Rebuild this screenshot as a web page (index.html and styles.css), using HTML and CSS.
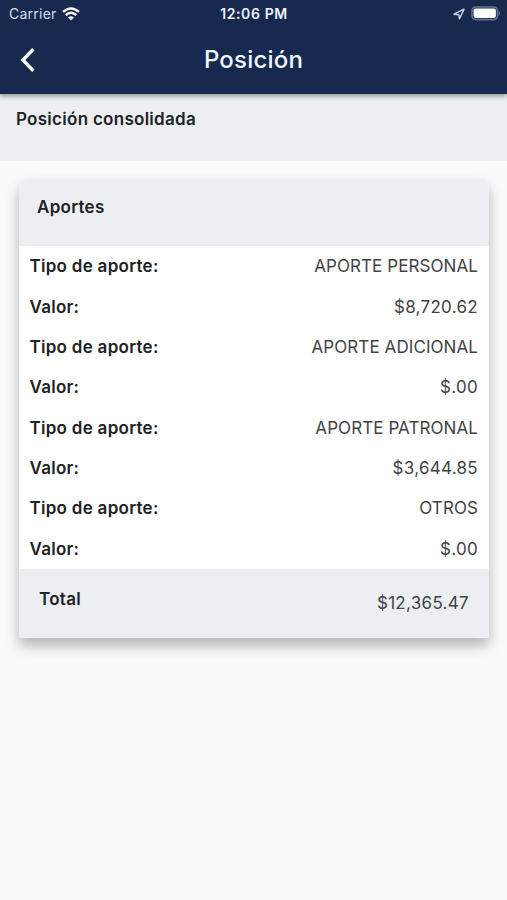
FILE: index.html
```html
<!DOCTYPE html>
<html lang="es">

<head>
    <meta charset="UTF-8">
    <meta name="viewport" content="width=device-width, initial-scale=1.0">
    <title>Posición</title>
    <link rel="stylesheet" href="styles.css">
</head>

<body>
    <header class="header">
        <div class="status">
            <div class="status-left">
                <span class="carrier">Carrier</span>
                <svg class="wifi" width="18" height="14" viewBox="0 0 18 14">
                    <path d="M1 4.9Q9 -2 17 4.9" />
                    <path d="M3.8 8Q9 3.4 14.2 8" />
                    <path class="dot" d="M6 10.6Q9 8 12 10.6L9 13.6Z" />
                </svg>
            </div>
            <span class="time">12:06 PM</span>
            <div class="status-right">
                <svg class="location" width="12" height="12" viewBox="0 0 12 12">
                    <path d="M1 6.2L11 1.2L6.5 10.8L5.8 6.7Z" />
                </svg>
                <svg class="battery" width="30" height="15" viewBox="0 0 30 15">
                    <rect class="battery-case" x="1" y="1" width="25.5" height="12.6" rx="4" />
                    <rect class="battery-level" x="2.6" y="2.6" width="22.3" height="9.4" rx="2" />
                    <path class="battery-tip" d="M27.6 4.6Q30.6 7.3 27.6 10Z" />
                </svg>
            </div>
        </div>
        <div class="toolbar">
            <a class="back" aria-label="Volver">
                <svg width="16" height="26" viewBox="0 0 16 26">
                    <path d="M13.3 2.2L2.9 13L13.3 23.8" />
                </svg>
            </a>
            <h1>Posición</h1>
        </div>
    </header>

    <div class="subtitle">
        <h2>Posición consolidada</h2>
    </div>

    <div class="card">
        <div class="card-header">
            <h2>Aportes</h2>
        </div>
        <div class="card-body">
            <div class="row"><b>Tipo de aporte:</b><span class="tipo">APORTE PERSONAL</span></div>
            <div class="row"><b>Valor:</b><span>$8,720.62</span></div>
            <div class="row"><b>Tipo de aporte:</b><span class="tipo">APORTE ADICIONAL</span></div>
            <div class="row"><b>Valor:</b><span>$.00</span></div>
            <div class="row"><b>Tipo de aporte:</b><span class="tipo">APORTE PATRONAL</span></div>
            <div class="row"><b>Valor:</b><span>$3,644.85</span></div>
            <div class="row"><b>Tipo de aporte:</b><span class="tipo">OTROS</span></div>
            <div class="row"><b>Valor:</b><span>$.00</span></div>
        </div>
        <div class="card-footer">
            <b>Total</b>
            <span class="total">$12,365.47</span>
        </div>
    </div>
</body>

</html>
```
FILE: styles.css
```css
* {
    box-sizing: border-box;
}

body {
    margin: 0;
    min-height: 900px;
    background-color: #fafafa;
    color: #212225;
    font-family: Inter, "Liberation Sans", sans-serif;
    font-size: 17px;
    line-height: 20px;
}

h1,
h2 {
    margin: 0;
}

h2,
b {
    font-size: 17px;
    font-weight: 600;
    line-height: 20px;
    letter-spacing: 0.28px;
}

svg {
    display: block;
    fill: none;
}

/* header */
.header {
    position: relative;
    height: 94px;
    background-color: #17294f;
    color: #fff;
    box-shadow: 0 2px 5px rgba(0, 0, 0, 0.4);
}

.status {
    display: grid;
    grid-template-columns: 1fr auto 1fr;
    align-items: center;
    height: 27px;
    padding: 0 7px 0 9px;
}

.status-left,
.status-right {
    display: flex;
    align-items: center;
}

.status-left {
    gap: 5px;
}

.status-right {
    justify-content: flex-end;
    gap: 6px;
}

.carrier {
    color: #d5ddec;
    font-size: 14px;
    letter-spacing: 0.25px;
}

.time {
    margin-right: 1px;
    color: #eef2fb;
    font-size: 14px;
    font-weight: 600;
    letter-spacing: 0.6px;
}

.wifi path {
    stroke: #fff;
    stroke-width: 2.4;
}

.wifi .dot {
    fill: #fff;
    stroke: none;
}

.location path {
    stroke: #c5d2e8;
    stroke-width: 1.5;
    stroke-linejoin: round;
}

.battery {
    margin-right: -1px;
}

.battery-case {
    stroke: #66738f;
    stroke-width: 1.6;
}

.battery-level {
    fill: #fff;
}

.battery-tip {
    fill: #66738f;
}

.toolbar {
    display: grid;
    grid-template-columns: 60px 1fr 60px;
    align-items: center;
    height: 65px;
}

.back {
    padding-left: 20px;
}

.back path {
    stroke: #fff;
    stroke-width: 3.4;
}

h1 {
    color: #f1f7ff;
    font-size: 24px;
    font-weight: 500;
    line-height: 30px;
    letter-spacing: 0.2px;
    text-align: center;
}

.subtitle {
    height: 67px;
    padding: 15px 16px;
    background-color: #edeef2;
}

/* card */
.card {
    margin: 18px 18px 0 19px;
    border-radius: 8px 8px 3px 3px;
    background-color: #fff;
    box-shadow: 0 8px 14px rgba(0, 0, 0, 0.28);
}

.card-header {
    height: 67px;
    padding: 18px;
    border-radius: 8px 8px 0 0;
    background-color: #edeef2;
}

.card-body {
    padding: 0 11px 0 10.5px;
}

.row {
    display: flex;
    justify-content: space-between;
    align-items: center;
    height: 40.35px;
}

.row span,
.total {
    color: #424346;
    letter-spacing: 0.3px;
}

.row .tipo {
    letter-spacing: 0.08px;
}

.card-footer {
    display: flex;
    justify-content: space-between;
    height: 69px;
    padding: 20px 20px 0;
    border-radius: 0 0 3px 3px;
    background-color: #edeef2;
}

.total {
    margin-top: 4px;
}
```
